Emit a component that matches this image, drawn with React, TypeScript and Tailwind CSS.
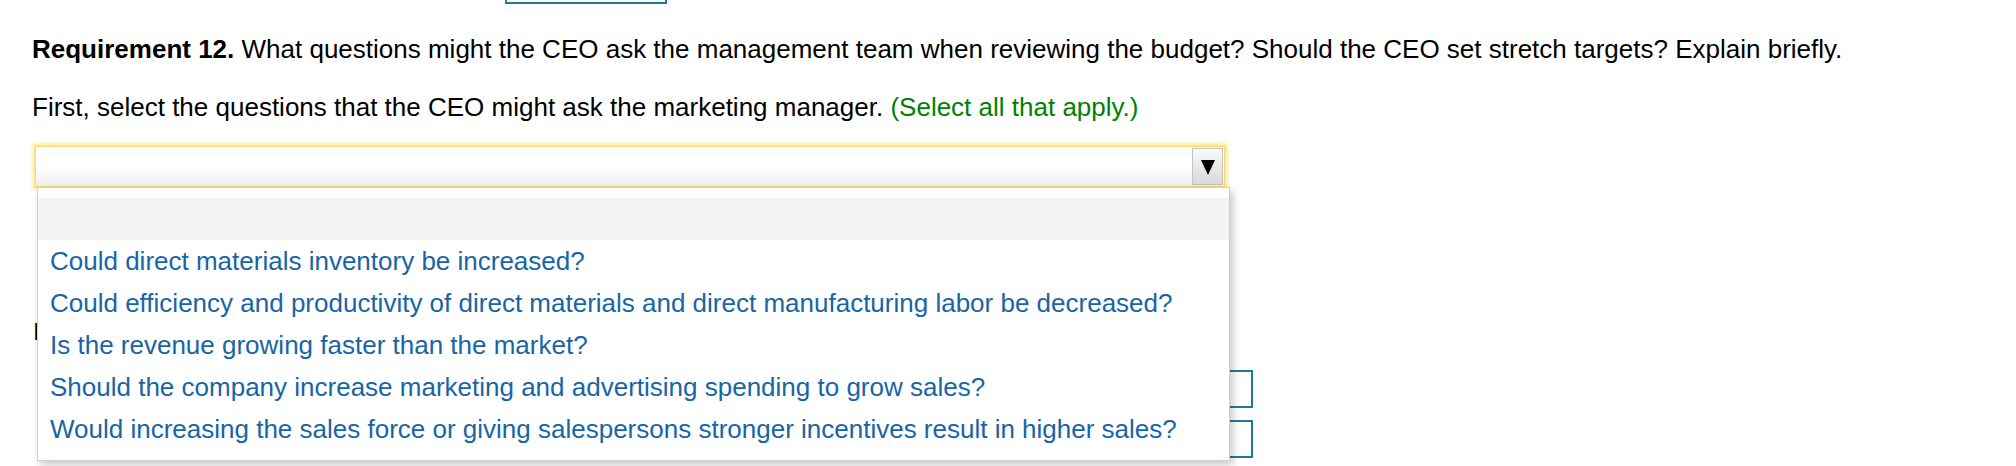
import { useState } from 'react'

const options = [
  '',
  'Could direct materials inventory be increased?',
  'Could efficiency and productivity of direct materials and direct manufacturing labor be decreased?',
  'Is the revenue growing faster than the market?',
  'Should the company increase marketing and advertising spending to grow sales?',
  'Would increasing the sales force or giving salespersons stronger incentives result in higher sales?',
]

export default function App() {
  const [active] = useState(0)

  return (
    <div className="h-[466px] w-[2016px] overflow-hidden bg-white font-['Liberation_Sans',Arial,sans-serif] text-[26px] leading-[28px] text-black">
      {/* bottom edge of the previous answer box */}
      <div className="ml-[505px] h-[4px] w-[162px] border-x-2 border-b-2 border-[#1b7b9c]" />

      <p className="ml-[32px] mt-[31px] whitespace-nowrap">
        <span className="font-bold">Requirement 12.</span> What questions might the CEO ask the management team when
        reviewing the budget? Should the CEO set stretch targets? Explain briefly.
      </p>

      <p className="ml-[32px] mt-[30px] whitespace-nowrap">
        First, select the questions that the CEO might ask the marketing manager.{' '}
        <span className="text-[#008000]">(Select all that apply.)</span>
      </p>

      <div className="relative ml-[35px] mt-[25px] w-[1190px]">
        {/* select box */}
        <div className="flex h-[41px] items-center justify-end border border-[#f3d873] bg-gradient-to-b from-white via-white to-[#eeeeee] pr-[1px] shadow-[0_0_4px_2px_#ffe27a]">
          <div className="flex h-[37px] w-[31px] items-center justify-center border border-[#c4c4c4] bg-gradient-to-b from-[#fafafa] to-[#d9d9d9]">
            <svg width="14" height="16" viewBox="0 0 14 16">
              <polygon points="0,1 14,1 7,16" fill="#000" />
            </svg>
          </div>
        </div>

        {/* content hidden under the open list */}
        <div className="relative h-[272px]">
          <div className="flex pt-[133px]">
            <span className="-ml-[2px] text-[24px] leading-[24px]">I</span>
          </div>
          <div className="flex flex-col items-end gap-[12px] pt-[26px]">
            <div className="-mr-[28px] h-[38px] w-[160px] border-2 border-[#1b7b9c]" />
            <div className="-mr-[28px] h-[38px] w-[160px] border-2 border-[#1b7b9c]" />
          </div>
        </div>

        {/* open list */}
        <div className="absolute left-[2px] top-[41px] w-[1193px] border border-[#d0d0d0] bg-white py-[10px] shadow-[3px_4px_8px_rgba(0,0,0,0.22)]">
          {options.map((o, i) => (
            <div
              key={i}
              className={`flex h-[42px] items-center whitespace-nowrap pl-[12px] text-[#1865a6] ${i === active ? 'bg-[#f3f3f3]' : ''}`}
            >
              {o}
            </div>
          ))}
        </div>
      </div>
    </div>
  )
}
